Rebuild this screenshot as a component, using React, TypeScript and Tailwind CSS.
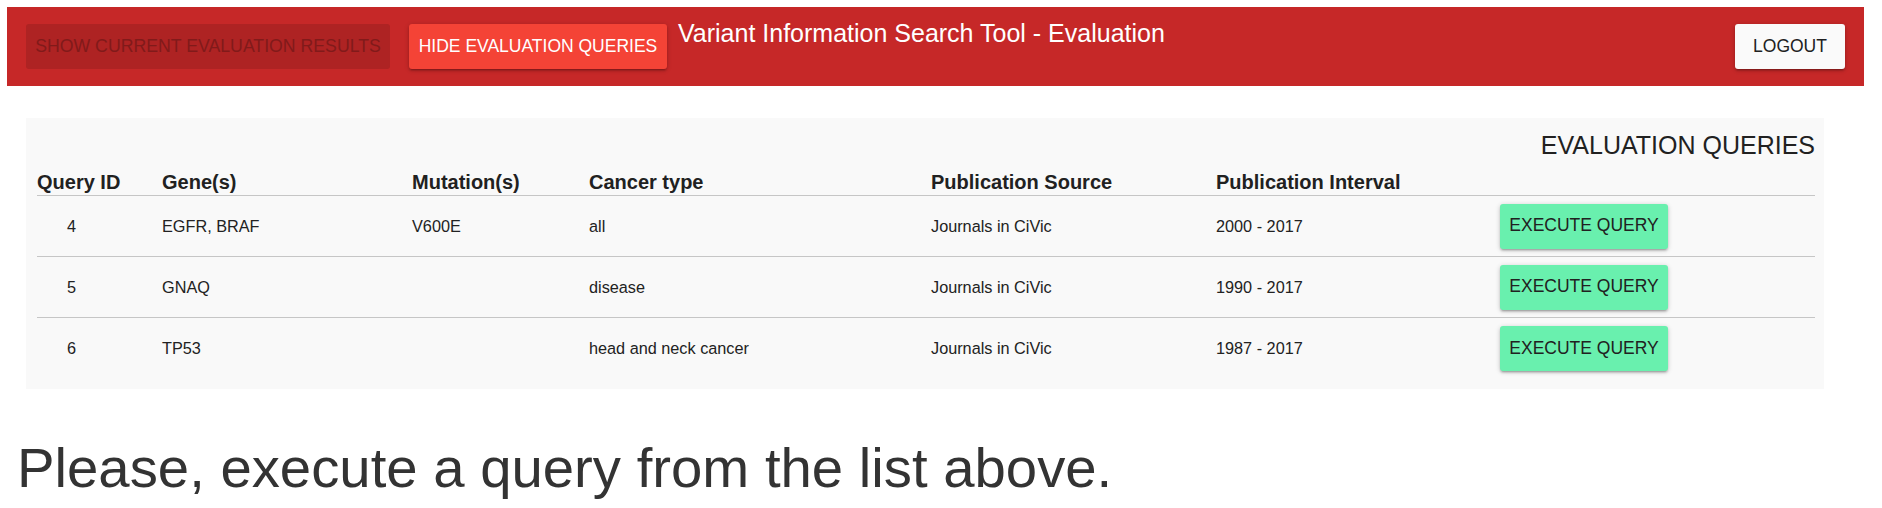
import React from 'react';

const raised =
  'shadow-[0_1px_5px_0_rgba(0,0,0,0.2),0_2px_2px_0_rgba(0,0,0,0.14),0_3px_1px_-2px_rgba(0,0,0,0.12)]';

const queries = [
  { id: 4, genes: 'EGFR, BRAF', mutations: 'V600E', cancer: 'all', source: 'Journals in CiVic', interval: '2000 - 2017' },
  { id: 5, genes: 'GNAQ', mutations: '', cancer: 'disease', source: 'Journals in CiVic', interval: '1990 - 2017' },
  { id: 6, genes: 'TP53', mutations: '', cancer: 'head and neck cancer', source: 'Journals in CiVic', interval: '1987 - 2017' },
];

const cols = 'grid grid-cols-[125px_250px_177px_342px_285px_284px_1fr]';

export default function App() {
  return (
    <div className="min-h-[508px] bg-white font-['Liberation_Sans',Arial,sans-serif] pt-[7px]">
      {/* app bar */}
      <header className="ml-[7px] w-[1857px] h-[79px] bg-[#c62828] flex items-start pt-[17px] px-[19px]">
        <button className="h-[45px] w-[364px] rounded-[3px] bg-[#ae2323] text-[#811a1a] text-[17.7px] leading-none uppercase">
          Show current evaluation results
        </button>
        <button className={`ml-[19px] h-[45px] w-[258px] rounded-[3px] bg-[#f44336] text-white text-[17.5px] leading-none uppercase ${raised}`}>
          Hide evaluation queries
        </button>
        <h1 className="ml-[11px] -mt-[3px] text-[25px] leading-[25px] text-white">
          Variant Information Search Tool - Evaluation
        </h1>
        <button className={`ml-auto h-[45px] w-[110px] rounded-[3px] bg-[#fafafa] text-[#212121] text-[17.5px] leading-none uppercase ${raised}`}>
          Logout
        </button>
      </header>

      {/* evaluation queries panel */}
      <section className="ml-[26px] mt-[32px] w-[1798px] bg-[#f9f9f9] pt-[13px] pb-[10px] pl-[11px] pr-[9px]">
        <div className="text-right text-[25px] leading-[29px] text-[#212121]">EVALUATION QUERIES</div>
        <div className={`${cols} border-b border-[#c6c6c6] text-[20px] font-bold leading-[23px] text-[#212121] pt-[11px] pb-[1px]`}>
          <div>Query ID</div>
          <div>Gene(s)</div>
          <div>Mutation(s)</div>
          <div>Cancer type</div>
          <div>Publication Source</div>
          <div>Publication Interval</div>
          <div />
        </div>
        {queries.map((q, i) => (
          <div
            key={q.id}
            className={`${cols} h-[61px] items-center text-[16.25px] text-[#222222] ${
              i < queries.length - 1 ? 'border-b border-[#c6c6c6]' : ''
            }`}
          >
            <div className="pl-[30px]">{q.id}</div>
            <div>{q.genes}</div>
            <div>{q.mutations}</div>
            <div>{q.cancer}</div>
            <div>{q.source}</div>
            <div>{q.interval}</div>
            <div>
              <button className={`h-[45px] w-[168px] rounded-[3px] bg-[#69f0ae] text-[#212121] text-[17.5px] leading-none uppercase ${raised}`}>
                Execute query
              </button>
            </div>
          </div>
        ))}
      </section>

      <p className="ml-[17px] mt-[47px] text-[56.3px] leading-[64px] text-[#333333]">
        Please, execute a query from the list above.
      </p>
    </div>
  );
}
